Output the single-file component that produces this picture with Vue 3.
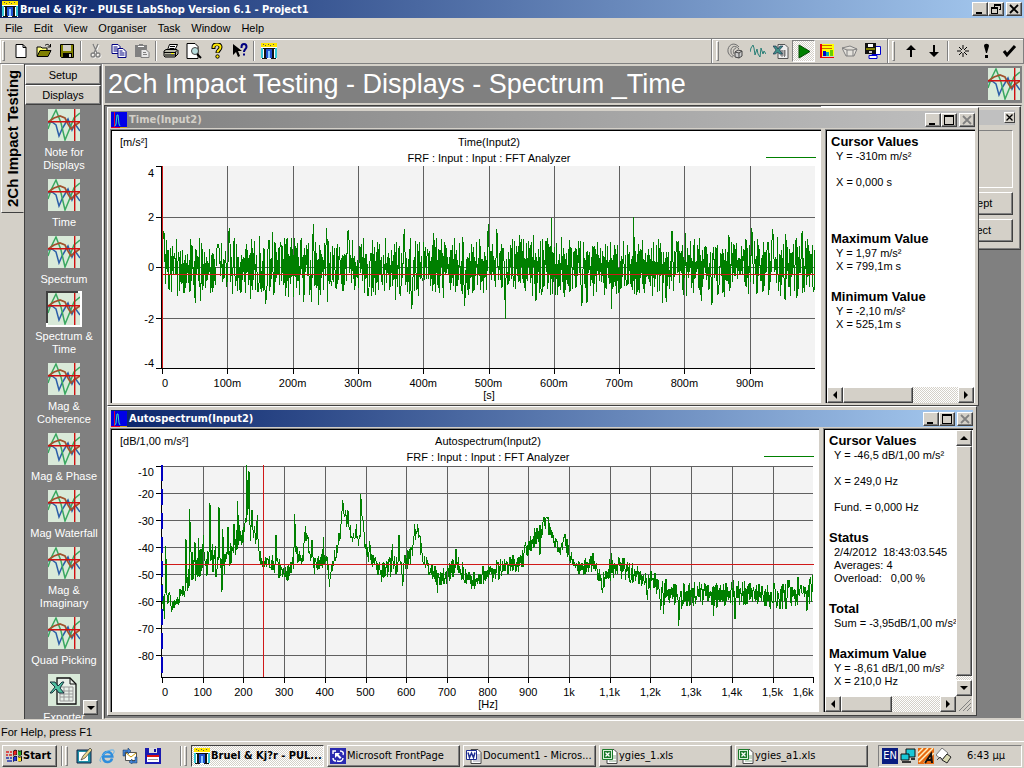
<template>
  <div class="app">
    <svg class="defs" aria-hidden="true">
      <symbol id="i-pulse" viewBox="0 0 16 16" shape-rendering="crispEdges">
        <path d="M0 4h16v12H0z" fill="#fff" /><path d="M0 0h16v4H0z" fill="#ffe600" />
        <path d="M2 1h1v1H2zM4 2h1v1H4zM7 1h1v1H7zM9 2h1v1H9zM12 1h1v1h-1z" fill="#555" />
        <path d="M2 5h12v1H2zM3 6h2v9H3zM11 6h2v9h-2zM1 15h5v1H1zM10 15h5v1h-5z" fill="#111" />
        <path d="M5 6h6v9H5z" fill="#2050d0" /><path d="M7 8h2v7H7z" fill="#8cf" /><path d="M0 5h2v10H0zM14 5h2v10h-2z" fill="#35c8d8" />
      </symbol>
      <symbol id="i-wave" viewBox="0 0 32 32">
        <path d="M0 0h32v32H0z" fill="#d9ead9" />
        <path d="M0 14l4-1 4 3 3 11 3-7 3-5 3-5 4 11 3-6 5 7" fill="none" stroke="#2d5fa8" stroke-width="1.5" />
        <path d="M0 20l3-9 5-10 5 13 4 17 5-12 4-10 6-5" fill="none" stroke="#3aa860" stroke-width="1.5" />
        <path d="M0 13l6-4 6-2 5 2 3 6 3 5 3-3 6-4" fill="none" stroke="#a0522d" stroke-width="1.7" />
        <path d="M0 12h32v1.400H0zM26 0h1.400v32H26z" fill="#d01010" />
      </symbol>
      <symbol id="i-exporter" viewBox="0 0 32 32">
        <path d="M0 0h32v32H0z" fill="#d9ead9" />
        <path d="M9 4h13l6 6v20H9z" fill="#e8efe8" stroke="#111" stroke-width="1.3" /><path d="M22 4v6h6" fill="none" stroke="#111" />
        <path d="M12 13h13v14H12zM12 17h13M12 20h13M12 23h13M16 13v14M21 13v14" fill="none" stroke="#999" />
        <path d="M2 8h5l3 4 4-4h2l-4 6 4 5h-5l-3-4-4 4H2l5-6z" fill="#4fc0a0" stroke="#123" stroke-width=".9" />
      </symbol>
      <symbol id="i-graph" viewBox="0 0 16 16">
        <path d="M0 0h16v16H0z" fill="#0000e8" /><path d="M3.500 0v15M0 15.500h9" stroke="#e00030" fill="none" />
        <path d="M4 14l1-2 1-9 1 0 1 9 1 2" stroke="#30e0c0" fill="none" /><path d="M9 15.500h7" stroke="#c8a020" />
      </symbol>
      <symbol id="i-new" viewBox="0 0 16 16"><path d="M3 1.500h7l3 3v10H3z" fill="#fff" stroke="#000" /><path d="M10 1.500v3h3" fill="none" stroke="#000" /></symbol>
      <symbol id="i-open" viewBox="0 0 16 16">
        <path d="M1 13V4h4l1 1h5v3" fill="#ffff80" stroke="#000" /><path d="M1 13.500l3-6h11l-3 6z" fill="#808000" stroke="#000" />
        <path d="M9 2.500c2-2 4-1 5 1M14.500 1v3h-3" fill="none" stroke="#000" />
      </symbol>
      <symbol id="i-save" viewBox="0 0 16 16"><path d="M1.500 1.500h13v13h-12l-1-1z" fill="#808000" stroke="#000" /><path d="M4 2h8v6H4z" fill="#d4d0c8" /><path d="M4 10h9v5H4z" fill="#000" /><path d="M10 11h2v3h-2z" fill="#d4d0c8" /></symbol>
      <symbol id="i-cut" viewBox="0 0 16 16"><g fill="none" stroke="#fff" transform="translate(1 1)"><path d="M5 1l4 9M10 1L6 10" /><circle cx="5" cy="12" r="2" /><circle cx="10" cy="12" r="2" /></g><g fill="none" stroke="#808080" stroke-width="1.300"><path d="M5 1l4 9M10 1L6 10" /><circle cx="5" cy="12" r="2" /><circle cx="10" cy="12" r="2" /></g></symbol>
      <symbol id="i-copy" viewBox="0 0 16 16"><path d="M1 1.500h6l2 2v7H1z" fill="#fff" stroke="#000080" /><path d="M2.500 4h4M2.500 6h5M2.500 8h5" stroke="#000080" /><path d="M7 5.500h5l3 3v6H7z" fill="#fff" stroke="#000080" /><path d="M8.500 8h3M8.500 10h5M8.500 12h5" stroke="#000080" /></symbol>
      <symbol id="i-paste" viewBox="0 0 16 16"><path d="M1 2h4V1h4v1h4v12H1z" fill="#808080" /><path d="M4 3h6v1H4z" fill="#fff" /><path d="M7 6.500h5l3 3v5H7z" fill="#e8e8e8" stroke="#808080" /><path d="M9 9.500h3M9 11.500h4" stroke="#808080" /></symbol>
      <symbol id="i-print" viewBox="0 0 16 16"><path d="M4.500 7l2-5.500h8L12 7" fill="#fff" stroke="#000" /><path d="M7 3.500h5M6.500 5.500h5" stroke="#000" /><path d="M1 8l2-1.500h11l1 1V11l-3 3H2l-1-1z" fill="#b8b8a8" stroke="#000" /><path d="M1 9.500h12M2 12h10M12.500 14V9l2-2" fill="none" stroke="#000" /><path d="M8 10h3v1H8z" fill="#ff0" /></symbol>
      <symbol id="i-preview" viewBox="0 0 16 16"><path d="M1 .5h8l3 3v12H1z" fill="#fff" stroke="#000" /><circle cx="9" cy="8" r="3.500" fill="#b8dede" stroke="#444" /><path d="M11 11l4 4" stroke="#000" stroke-width="2" /></symbol>
      <symbol id="i-help" viewBox="0 0 16 16"><path d="M4.500 6V4c0-4 7-4 7 0 0 3-3 3-3 6" fill="none" stroke="#000" stroke-width="4" /><path d="M4.500 5V4c0-3.500 7-3.500 7 0 0 3-3 3-3 5.500" fill="none" stroke="#ffe800" stroke-width="2" /><circle cx="8.500" cy="13.500" r="1.700" fill="#ffe800" stroke="#000" /></symbol>
      <symbol id="i-context" viewBox="0 0 16 16"><path d="M1 1v11l3-3 2 5 2-1-2-5h4z" fill="#000" /><path d="M9.500 5V4c0-4 5-4 5 0 0 2-2.500 2-2.500 5" fill="none" stroke="#000080" stroke-width="2" /><path d="M11 10.500h2v2h-2z" fill="#000080" /></symbol>
      <symbol id="i-radar" viewBox="0 0 16 16" fill="none" stroke="#707070"><path d="M12 4C7-2 0 2 1 9c1 3 3 5 5 5M12 6C8 1 3 4 4 9c0 2 1 3 3 4M9 5c-3 1-3 4-2 6" /><path d="M8 9l3-2 4 1v5l-3 2-4-1zM8 9l4 1 3-2M12 10v5" fill="#ccc" stroke="#444" /></symbol>
      <symbol id="i-signal" viewBox="0 0 16 16"><path d="M0 9l1-4 2-3 1 3 1 7 2-6 1 5 2 3 1-9 2 6 1-3 2 3" fill="none" stroke="#2a8078" /></symbol>
      <symbol id="i-sheet" viewBox="0 0 16 16"><path d="M5 1.500h7l3 3v11H5z" fill="#eee" stroke="#555" /><path d="M7 8h6M7 10h6M7 12h6M9 7v7M11.500 7v7" stroke="#777" /><path d="M0 3h3l2 3 2-3h3L6.500 7l3 4h-3l-2-2-2 2H0l3-4z" fill="#3e9088" stroke="#124" stroke-width=".6" /></symbol>
      <symbol id="i-play" viewBox="0 0 16 16"><path d="M3 2l11 6.500L3 15z" fill="#008000" stroke="#004800" /></symbol>
      <symbol id="i-chart" viewBox="0 0 16 16" shape-rendering="crispEdges"><path d="M3 1h12v12H3z" fill="#ff0" /><path d="M1 1h2v14H1z" fill="#e00" /><path d="M3 2.500h10M3 5.500h10" stroke="#c60" /><path d="M4 8h3v5H4z" fill="#00c" /><path d="M7 9h3v4H7z" fill="#0aa" /><path d="M11 7h3v6h-3z" fill="#6c0" /><path d="M1 14h14" stroke="#e00" /></symbol>
      <symbol id="i-tray" viewBox="0 0 16 16"><path d="M0 5l8-2 7 3-3 7H4zM0 5l5 2h6l4-1M5 7v6M11 7v6" fill="#e4e2dc" stroke="#808080" /></symbol>
      <symbol id="i-saveas" viewBox="0 0 16 16"><path d="M7 3.500h8.500v8H7zM4 12.500h8v3H4z" fill="#fff" stroke="#0000d0" /><path d="M0 0h11v11H0z" fill="#111" /><path d="M3 1h5v3H3z" fill="#fff" /><path d="M1 5h9v2H1z" fill="#808000" /><path d="M4 8h3v2H4z" fill="#ccc" /></symbol>
      <symbol id="i-up" viewBox="0 0 16 16"><path d="M8 2l5 5H9v7H7V7H3z" /></symbol>
      <symbol id="i-down" viewBox="0 0 16 16"><path d="M8 14L3 9h4V2h2v7h4z" /></symbol>
      <symbol id="i-star" viewBox="0 0 16 16"><path d="M8 2v4M8 10v4M2 8h4M10 8h4M4 4l3 3M9 9l3 3M12 4L9 7M7 9l-3 3" stroke="#000" /></symbol>
      <symbol id="i-bang" viewBox="0 0 16 16"><path d="M6 3c0-3 5-3 5 0L9 10H8zM7 12h3v3H7z" /></symbol>
      <symbol id="i-check" viewBox="0 0 16 16"><path d="M3 8l3 4 8-9" fill="none" stroke="#000" stroke-width="3" /></symbol>
      <symbol id="i-min" viewBox="0 0 12 12" shape-rendering="crispEdges"><path d="M2 9h6v2H2z" /></symbol>
      <symbol id="i-max" viewBox="0 0 12 12" shape-rendering="crispEdges"><path d="M1 1h10v10H1zM2 3v7h8V3z" fill-rule="evenodd" /></symbol>
      <symbol id="i-restore" viewBox="0 0 12 12" shape-rendering="crispEdges"><path d="M4 1h7v6H9V6h1V3H5v1H4zM1 4h7v7H1zM2 6v4h5V6z" fill-rule="evenodd" /></symbol>
      <symbol id="i-close" viewBox="0 0 12 12"><path d="M2 2l8 8M10 2l-8 8" stroke="currentColor" stroke-width="1.800" /></symbol>
      <symbol id="i-left" viewBox="0 0 8 8"><path d="M6 0v8L2 4z" /></symbol>
      <symbol id="i-right" viewBox="0 0 8 8"><path d="M2 0v8l4-4z" /></symbol>
      <symbol id="i-top" viewBox="0 0 8 8"><path d="M0 6h8L4 2z" /></symbol>
      <symbol id="i-bottom" viewBox="0 0 8 8"><path d="M0 2h8L4 6z" /></symbol>
      <symbol id="i-windows" viewBox="0 0 16 16">
        <path d="M7 3c2-2 3-1 4-1v5c-1 0-2-1-4 1zM12 2c1 1 2 1 4 0v5c-2 1-3 1-4 0zM7 9c2-2 3-1 4-1v5c-1 0-2-1-4 1zM12 8c1 1 2 1 4 0v5c-2 1-3 1-4 0z" fill="#111" />
        <path d="M7.500 3.500c1-1 2-1 3-1v4c-1 0-2 0-3 1z" fill="#e22" /><path d="M12 3c1 1 2 1 3 0v4c-1 1-2 0-3 0z" fill="#2a2" /><path d="M7.500 9.500c1-1 2-1 3-1v4c-1 0-2 0-3 1z" fill="#23d" /><path d="M12 9c1 1 2 1 3 0v4c-1 1-2 0-3 0z" fill="#fd2" />
        <path d="M0 4h3M4 4h2M0 7h2M3 7h3" stroke="#d22" stroke-width="1.500" /><path d="M0 10h3M4 10h2M1 13h5" stroke="#23a" stroke-width="1.500" />
      </symbol>
      <symbol id="i-desktop" viewBox="0 0 16 16"><path d="M1 2h14v13H1z" fill="#2090a8" stroke="#124" /><path d="M3 4h9v9H3z" fill="#fff" /><path d="M5 12l2-4 7-8 2 2-7 8z" fill="#e8d890" stroke="#333" stroke-width=".7" /></symbol>
      <symbol id="i-ie" viewBox="0 0 16 16"><path d="M13 10.500c-1 5-9 5-9-2 0-6 9-6 9.300 0H5" fill="none" stroke="#2f8ddc" stroke-width="2.600" /><path d="M2 14c-4-2 5-13 12-12 2 0 1 3 0 4" fill="none" stroke="#58b0ee" /></symbol>
      <symbol id="i-mail" viewBox="0 0 16 16"><path d="M3.500 4.500h11v8h-11z" fill="#fff" stroke="#555" /><path d="M4 5l5 4 5-4" fill="none" stroke="#c90" /><path d="M1 8V2h5V0l3 3-3 3V4H3v4zM15 9v6h-5v1l-3-2 3-3v2h3V9z" fill="#4484d8" stroke="#135" stroke-width=".5" /></symbol>
      <symbol id="i-disk" viewBox="0 0 16 16"><path d="M0 0h16v16H0z" fill="#1a1ab0" /><path d="M4 0h8v5H4z" fill="#ddd" /><path d="M9 1h2v3H9z" fill="#119" /><path d="M2 7h12v2H2z" fill="#d11" /><path d="M2 9h12v5H2z" fill="#fff" /><path d="M3 11.500h10" stroke="#999" /></symbol>
      <symbol id="i-frontpage" viewBox="0 0 16 16"><path d="M0 0h16v16H0z" fill="#2a2ab0" /><path d="M3 6V3h3M10 3c3 0 4 2 3 4M13 10c0 3-3 4-6 3M3 10c0 2 1 3 3 3" fill="none" stroke="#fff" stroke-width="1.400" /><path d="M5 5h5L8.500 6.500l3 3-1.500 1.500-3-3L5 10z" fill="#fff" /></symbol>
      <symbol id="i-word" viewBox="0 0 16 16"><path d="M5 1.500h7l3 3v11H5z" fill="#fff" stroke="#444" /><path d="M11 7h3M11 9h3M11 11h3M7 13h7" stroke="#99a" /><path d="M.5 2.500h10v9H.5z" fill="#fff" stroke="#1c2c90" /><path d="M2 4.500l1.500 5L5.500 5l2 4.500L9 4.500" fill="none" stroke="#1c2c90" stroke-width="1.500" /></symbol>
      <symbol id="i-excel" viewBox="0 0 16 16"><path d="M5 1.500h7l3 3v11H5z" fill="#fff" stroke="#444" /><path d="M11 8h3M11 10h3M7 13h7" stroke="#8a8" /><path d="M.5 1.500h10v10H.5z" fill="#d8f0d8" stroke="#1a7a2a" /><path d="M2 3h7v7H2z" fill="#1a7a2a" /><path d="M3.500 4.500l4 4M7.500 4.500l-4 4" stroke="#fff" stroke-width="1.300" /></symbol>
      <symbol id="i-net" viewBox="0 0 16 16"><path d="M6 1h9v8H6z" fill="#18c8d8" stroke="#111" /><path d="M1 6h8v6H1z" fill="#18c8d8" stroke="#111" /><path d="M2 14h9M11 11h4" stroke="#333" stroke-width="2" /></symbol>
      <symbol id="i-av" viewBox="0 0 16 16"><path d="M0 0h16v16H0z" fill="#e86a10" /><path d="M0 5l5-5M0 10L10 0M1 14L15 0M6 15L16 5" stroke="#fff0c0" stroke-width="1.500" /><path d="M7 15l6-9 1 9M9 12h5" fill="none" stroke="#111" stroke-width="2" /></symbol>
      <symbol id="i-tool" viewBox="0 0 16 16"><path d="M0 7l6-7 6 5-6 7z" fill="#fff" stroke="#777" /><path d="M6 12l5-6 4 3-4 6z" fill="#d8d8b0" stroke="#222" /><path d="M1 12l3-3 3 3" fill="none" stroke="#444" /></symbol>
    </svg>

    <header class="titlebar">
      <svg class="ico"><use href="#i-pulse" /></svg>
      <h1>Bruel &amp; Kj?r - PULSE LabShop Version 6.1 - Project1</h1>
      <button class="cap" aria-label="Minimize"><svg><use href="#i-min" /></svg></button>
      <button class="cap" aria-label="Restore"><svg><use href="#i-restore" /></svg></button>
      <button class="cap cap-close" aria-label="Close"><svg><use href="#i-close" /></svg></button>
    </header>

    <nav class="menu">
      <button v-for="m in menus" :key="m">{{ m }}</button>
    </nav>

    <div class="toolbar">
      <div v-for="(bar, b) in toolbars" :key="b" class="bar" :class="{ main: b === 0 }">
        <i class="grip"></i>
        <template v-for="(t, i) in bar" :key="i">
          <i v-if="t === '|'" class="sep"></i>
          <button v-else class="tool" :class="{ pressed: t === 'play' }" :aria-label="t">
            <svg class="ico"><use :href="'#i-' + t" /></svg>
          </button>
        </template>
      </div>
    </div>

    <main class="body">
      <div class="tabs"><button class="vtab">2Ch Impact Testing</button></div>

      <aside class="sidebar">
        <button class="group">Setup</button>
        <button class="group">Displays</button>
        <div class="shortcuts">
          <button v-for="s in shortcuts" :key="s.label" class="shortcut" :class="{ active: s.active, wrap: s.wrap }">
            <svg><use :href="s.icon || '#i-wave'" /></svg>
            <span>{{ s.label }}</span>
          </button>
        </div>
        <button class="more" aria-label="Scroll down"><svg><use href="#i-bottom" /></svg></button>
      </aside>

      <section class="content">
        <div class="banner">
          <h2>2Ch Impact Testing - Displays - Spectrum _Time</h2>
          <svg><use href="#i-wave" /></svg>
        </div>

        <div class="workspace">
          <div class="dialog">
            <div class="dialog-title"><button aria-label="Close dialog"><svg><use href="#i-close" /></svg></button></div>
            <div class="dialog-box"></div>
            <button class="dialog-btn">Accept</button>
            <button class="dialog-btn">Reject</button>
          </div>

          <article v-for="w in windows" :key="w.title" class="window" :class="w.cls">
            <div class="win-title">
              <svg class="ico"><use href="#i-graph" /></svg>
              <h3>{{ w.title }}</h3>
              <button class="cap" aria-label="Minimize"><svg><use href="#i-min" /></svg></button>
              <button class="cap" aria-label="Maximize"><svg><use href="#i-max" /></svg></button>
              <button class="cap cap-close off" aria-label="Close"><svg><use href="#i-close" /></svg></button>
            </div>
            <div class="win-body">
              <div class="chart">
                <svg :viewBox="`0 0 ${w.width} ${w.height}`" shape-rendering="crispEdges" role="img" :aria-label="w.title">
                  <rect :x="50" :y="w.top" :width="w.right - 50" :height="w.bottom - w.top" fill="#f3f3f3" />
                  <path :d="w.grid" stroke="#606060" fill="none" />
                  <path :d="w.axis" stroke="#000" fill="none" />
                  <path :d="w.trace" stroke="#008000" fill="none" stroke-linejoin="bevel" />
                  <path :d="w.cursor" stroke="#d01818" fill="none" />
                  <path v-if="w.marker" :d="w.marker" stroke="#0000c0" stroke-width="2" stroke-dasharray="16 8" fill="none" />
                  <path v-if="w.redAxis" :d="w.redAxis" stroke="#d01818" fill="none" />
                  <path :d="`M${w.right - 49} 26.5h50`" stroke="#008000" />
                  <text x="8" y="15">{{ w.unit }}</text>
                  <text :x="w.mid" y="15" text-anchor="middle">{{ w.title }}</text>
                  <text :x="w.mid" y="31" text-anchor="middle">FRF : Input : Input : FFT Analyzer</text>
                  <text v-for="t in w.yTicks" :key="'y' + t.text" x="42" :y="t.at" text-anchor="end">{{ t.text }}</text>
                  <text v-for="t in w.xTicks" :key="'x' + t.text" :x="t.at" :y="w.bottom + 19" text-anchor="middle">{{ t.text }}</text>
                  <text :x="w.mid" :y="w.bottom + 31" text-anchor="middle">{{ w.xUnit }}</text>
                </svg>
              </div>
              <div class="side">
                <div class="side-main">
                  <div class="values">
                    <section v-for="s in w.values" :key="s.head">
                      <h4>{{ s.head }}</h4>
                      <p v-for="(r, i) in s.rows" :key="i">{{ r }}</p>
                    </section>
                  </div>
                  <div v-if="w.marker" class="vscroll">
                    <button aria-label="Scroll up"><svg><use href="#i-top" /></svg></button>
                    <i class="thumb"></i>
                    <button aria-label="Scroll down"><svg><use href="#i-bottom" /></svg></button>
                  </div>
                </div>
                <div class="hscroll">
                  <button aria-label="Scroll left"><svg><use href="#i-left" /></svg></button>
                  <i class="thumb"></i><i class="track"></i>
                  <button aria-label="Scroll right"><svg><use href="#i-right" /></svg></button>
                  <svg v-if="w.marker" class="size" viewBox="0 0 16 16"><path d="M3 15L15 3M7 15l8-8M11 15l4-4" stroke="#808080" /></svg>
                </div>
              </div>
            </div>
          </article>
        </div>
      </section>
    </main>

    <div class="status">For Help, press F1</div>

    <footer class="taskbar">
      <button class="start"><svg class="ico"><use href="#i-windows" /></svg>Start</button>
      <i class="sep"></i><i class="grip"></i>
      <div class="quick">
        <button v-for="q in ['desktop', 'ie', 'mail', 'disk']" :key="q" class="tool" :aria-label="q">
          <svg class="ico"><use :href="'#i-' + q" /></svg>
        </button>
      </div>
      <i class="sep"></i><i class="grip"></i>
      <div class="tasks">
        <button v-for="t in tasks" :key="t.text" class="task" :class="{ pressed: t.active }">
          <svg class="ico"><use :href="'#i-' + t.icon" /></svg><span>{{ t.text }}</span>
        </button>
      </div>
      <div class="tray">
        <b>EN</b>
        <svg class="ico"><use href="#i-net" /></svg>
        <svg class="ico"><use href="#i-av" /></svg>
        <svg class="ico"><use href="#i-tool" /></svg>
        <time>6:43 μμ</time>
      </div>
    </footer>
  </div>
</template>

<script setup>
const menus = ['File', 'Edit', 'View', 'Organiser', 'Task', 'Window', 'Help'];

const toolbars = [
  ['new', 'open', 'save', '|', 'cut', 'copy', 'paste', '|', 'print', 'preview', 'help', 'context', '|', 'pulse'],
  ['radar', 'signal', 'sheet', 'play', 'chart', 'tray', 'saveas'],
  ['up', 'down', '|', 'star', 'bang', 'check'],
];

const shortcuts = [
  { label: 'Note for Displays', wrap: true },
  { label: 'Time' },
  { label: 'Spectrum' },
  { label: 'Spectrum & Time', wrap: true, active: true },
  { label: 'Mag & Coherence', wrap: true },
  { label: 'Mag & Phase' },
  { label: 'Mag Waterfall' },
  { label: 'Mag & Imaginary', wrap: true },
  { label: 'Quad Picking' },
  { label: 'Exporter', icon: '#i-exporter' },
];

const tasks = [
  { icon: 'pulse', text: 'Bruel & Kj?r - PUL...', active: true },
  { icon: 'frontpage', text: 'Microsoft FrontPage' },
  { icon: 'word', text: 'Document1 - Micros...' },
  { icon: 'excel', text: 'ygies_1.xls' },
  { icon: 'excel', text: 'ygies_a1.xls' },
];

// small seeded generator so the traces are the same on every load
const makeRandom = (seed) => () => {
  seed = (seed * 1664525 + 1013904223) % 4294967296;
  return seed / 4294967296;
};

// put single peaks on top of the noise, spikes are [x, y]
const toPath = (points, spikes) => {
  spikes.forEach(([x, y]) => {
    let best = 0;
    points.forEach((p, i) => {
      if (Math.abs(p[0] - x) < Math.abs(points[best][0] - x)) best = i;
    });
    points[best][1] = y;
  });
  return 'M' + points.map((p) => p[0].toFixed(1) + ' ' + p[1].toFixed(1)).join('L');
};

const timeTrace = () => {
  const rnd = makeRandom(77);
  const points = [];
  let sign = 1;
  for (let x = 50; x <= 703; x += 0.85) {
    sign = rnd() < 0.92 ? -sign : sign;
    const amp = 5 + 24 * rnd() + (rnd() < 0.25 ? 8 * rnd() : 0);
    points.push([x, 136 - sign * amp]);
  }
  return toPath(points, [
    [52, 100], [117, 97], [201, 93], [215, 97], [236, 99], [154, 173], [206, 174], [292, 98],
    [300, 178], [376, 93], [385, 98], [393, 188], [353, 175], [439, 87], [522, 86], [470, 175],
    [500, 178], [560, 100], [600, 174], [640, 97], [660, 98], [690, 100],
  ]);
};

// noise floor of the spectrum: x, centre, half height
const floor = [
  [50, 170, 18], [55, 166, 5], [59, 173, 8], [66, 173, 8], [70, 160, 6], [74, 158, 8], [77, 140, 17], [82, 140, 18],
  [88, 135, 18], [94, 140, 14], [98, 117, 10], [101, 130, 12], [105, 140, 12], [110, 133, 14], [115, 127, 10],
  [121, 121, 10], [125, 107, 14], [131, 106, 10], [134, 86, 8], [136, 75, 8], [138, 98, 10], [142, 103, 16],
  [147, 121, 8], [150, 133, 4], [158, 133, 8], [165, 138, 9], [173, 143, 9], [180, 140, 9], [183, 118, 6],
  [186, 127, 9], [190, 133, 7], [193, 107, 6], [196, 108, 6], [198, 127, 6], [202, 135, 8], [211, 133, 9],
  [214, 123, 8], [217, 145, 8], [221, 133, 8], [226, 119, 8], [230, 87, 8], [232, 83, 12], [237, 88, 8],
  [240, 113, 5], [244, 100, 7], [247, 113, 6], [250, 80, 6], [252, 108, 8], [256, 123, 8], [263, 133, 6],
  [270, 143, 9], [276, 138, 9], [291, 133, 9], [300, 127, 9], [303, 107, 9], [306, 103, 9], [310, 123, 7],
  [315, 134, 8], [326, 150, 9], [335, 144, 9], [345, 134, 8], [351, 143, 9], [358, 148, 9], [361, 153, 9],
  [375, 143, 9], [385, 140, 9], [398, 137, 9], [411, 128, 9], [416, 117, 9], [425, 105, 9], [435, 92, 9],
  [441, 107, 6], [448, 122, 5], [453, 111, 9], [458, 128, 8], [466, 138, 7], [481, 132, 10], [490, 152, 7],
  [498, 140, 10], [511, 138, 10], [525, 145, 9], [538, 151, 10], [551, 160, 11], [568, 166, 10], [588, 163, 12],
  [605, 165, 11], [631, 161, 13], [648, 165, 12], [665, 166, 12], [681, 163, 14], [701, 157, 15],
];

const spectrumTrace = () => {
  const rnd = makeRandom(2012);
  const points = [];
  let k = 0;
  let sign = 1;
  for (let x = 50; x <= 701; x += 0.75) {
    while (k < floor.length - 2 && floor[k + 1][0] < x) k++;
    const [x0, c0, h0] = floor[k];
    const [x1, c1, h1] = floor[k + 1];
    const f = (x - x0) / (x1 - x0);
    sign = rnd() < 0.8 ? -sign : sign;
    points.push([x, c0 + (c1 - c0) * f + sign * (0.15 + rnd()) * (h0 + (h1 - h0) * f)]);
  }
  return toPath(points, [
    [52, 189], [54, 116], [74, 109], [78, 79], [83, 112], [87, 108], [91, 105], [98, 73], [103, 116], [107, 77],
    [110, 162], [111, 99], [116, 97], [122, 94], [126, 71], [135, 35], [137, 41], [140, 80], [145, 85], [164, 105],
    [183, 84], [193, 96], [200, 110], [211, 107], [217, 157], [231, 70], [234, 80], [244, 94], [249, 64],
    [258, 111], [280, 114], [287, 105], [291, 156], [303, 94], [306, 94], [325, 163], [344, 119], [432, 87],
    [435, 87], [453, 104], [428, 125], [481, 123], [490, 163], [499, 123], [535, 170], [549, 180], [552, 184],
    [567, 196], [570, 179], [601, 186], [623, 189], [695, 181],
  ]);
};

const steps = (n, fn) => Array.from({ length: n }, (_, i) => fn(i));
const at = (v) => Math.round(v) + 0.5;

const timeX = (i) => 50 + i * 65.3;
const specX = (i) => 50 + i * 40.7;

const windows = [
  {
    title: 'Time(Input2)',
    cls: 'inactive',
    width: 709,
    height: 272,
    top: 35,
    right: 703,
    bottom: 237,
    mid: 377,
    unit: '[m/s²]',
    xUnit: '[s]',
    grid: steps(9, (i) => `M${at(timeX(i + 1))} 35v202`).join('') + 'M50 86.5h653M50 136.5h653M50 187.5h653',
    axis: 'M49.500 35v203M44 35.500h6M44 86.500h6M44 136.500h6M44 187.500h6M44 237.500h659' + steps(10, (i) => `M${at(timeX(i))} 238v5`).join(''),
    trace: timeTrace(),
    cursor: 'M50 143.500h653',
    redAxis: 'M50.500 35v202',
    yTicks: [
      { text: '4', at: 46 }, { text: '2', at: 90 }, { text: '0', at: 140 }, { text: '-2', at: 192 }, { text: '-4', at: 236 },
    ],
    xTicks: steps(10, (i) => ({ text: i ? i * 100 + 'm' : '0', at: timeX(i) + (i ? 0 : 3) })),
    values: [
      { head: 'Cursor Values', rows: ['Y = -310m m/s²', '', 'X = 0,000 s', '', ''] },
      { head: 'Maximum Value', rows: ['Y = 1,97 m/s²', 'X = 799,1m s'] },
      { head: 'Minimum Value', rows: ['Y = -2,10 m/s²', 'X = 525,1m s'] },
    ],
  },
  {
    title: 'Autospectrum(Input2)',
    cls: 'current',
    width: 707,
    height: 282,
    top: 36,
    right: 701,
    bottom: 247,
    mid: 376,
    unit: '[dB/1,00 m/s²]',
    xUnit: '[Hz]',
    grid: steps(15, (i) => `M${at(specX(i + 1))} 36v211`).join('') + steps(8, (i) => `M50 ${36.5 + i * 27}h651`).join(''),
    axis: 'M49.500 36v212M49 247.500h653' + steps(8, (i) => `M44 ${36.5 + i * 27}h6`).join('') + steps(17, (i) => `M${at(specX(i))} 248v5`).join(''),
    trace: spectrumTrace(),
    cursor: 'M50 134.500h652M151.500 35v212',
    marker: 'M50 35v211',
    yTicks: steps(8, (i) => ({ text: String(-10 * (i + 1)), at: i ? 41 + i * 27 : 46 })),
    xTicks: steps(17, (i) => ({
      text: i < 10 ? String(i * 100) : String(i / 10).replace('.', ',') + 'k',
      at: specX(i) + (i === 0 ? 3 : i === 16 ? -10 : 0),
    })),
    values: [
      { head: 'Cursor Values', rows: ['Y = -46,5 dB/1,00 m/s²', '', 'X = 249,0 Hz', '', 'Fund. = 0,000 Hz'] },
      { head: 'Status', rows: ['2/4/2012  18:43:03.545', 'Averages: 4', 'Overload:   0,00 %'] },
      { head: 'Total', rows: ['Sum = -3,95dB/1,00 m/s²'] },
      { head: 'Maximum Value', rows: ['Y = -8,61 dB/1,00 m/s²', 'X = 210,0 Hz'] },
    ],
  },
];
</script>

<style>
body {
  margin: 0;
}
</style>

<style scoped>
.app {
  height: 100vh;
  display: flex;
  flex-direction: column;
  overflow: hidden;
  background: #d4d0c8;
  color: #000;
  font: 11px/13px "Liberation Sans", Arial, sans-serif;
}

.app * {
  box-sizing: border-box;
}

.defs {
  position: absolute;
  width: 0;
  height: 0;
}

h1, h2, h3, h4, p {
  margin: 0;
  font-size: inherit;
}

button {
  margin: 0;
  padding: 0;
  border: 0;
  background: #d4d0c8;
  color: inherit;
  font: inherit;
}

svg {
  display: block;
  flex: none;
}

.ico {
  width: 16px;
  height: 16px;
}

.cap, .start, .task, .thumb, .group, .more, .dialog-btn, .hscroll button, .vscroll button {
  border: 1px solid;
  border-color: #fff #404040 #404040 #fff;
  box-shadow: inset -1px -1px #808080;
}

/* title bars */
.titlebar, .win-title {
  display: flex;
  align-items: center;
  color: #fff;
  background: linear-gradient(to right, #0a246a, #a6caf0);
  font-family: "DejaVu Sans Condensed", "DejaVu Sans", sans-serif;
}

.titlebar {
  height: 18px;
  flex: none;
  padding: 0 2px;
}

.titlebar h1, .win-title h3 {
  flex: 1;
  margin-left: 2px;
  font-weight: bold;
  white-space: nowrap;
}

.cap {
  width: 16px;
  height: 14px;
  display: flex;
  align-items: center;
  justify-content: center;
  color: #000;
}

.cap svg {
  width: 12px;
  height: 12px;
}

.cap-close {
  margin-left: 2px;
}

.off {
  color: #808080;
}

/* menu and toolbar */
.menu {
  height: 20px;
  flex: none;
  display: flex;
  gap: 1px;
}

.menu button {
  padding: 0 5px;
}

.toolbar {
  height: 26px;
  flex: none;
  display: flex;
  border-top: 1px solid #808080;
  border-bottom: 1px solid #808080;
  box-shadow: inset 0 1px #fff;
}

.bar {
  display: flex;
  align-items: center;
  padding: 0 3px;
  border-left: 1px solid #fff;
  border-right: 1px solid #808080;
}

.bar.main {
  flex: 1;
  padding-left: 1px;
}

.grip {
  width: 3px;
  height: 20px;
  margin-right: 4px;
  border: 1px solid;
  border-color: #fff #808080 #808080 #fff;
}

.sep {
  width: 2px;
  height: 20px;
  margin: 0 2px;
  border-left: 1px solid #808080;
  border-right: 1px solid #fff;
}

.tool {
  width: 23px;
  height: 22px;
  display: flex;
  align-items: center;
  justify-content: center;
}

.pressed {
  border: 1px solid;
  border-color: #808080 #fff #fff #808080;
  background: repeating-conic-gradient(#fff 0 25%, #d4d0c8 0 50%) 0 0 / 2px 2px;
}

/* main area */
.body {
  flex: 1;
  min-height: 0;
  display: flex;
}

.tabs {
  width: 24px;
  flex: none;
}

.vtab {
  width: 23px;
  height: 149px;
  margin-left: 1px;
  border: 1px solid;
  border-color: #404040 #fff #fff #d4d0c8;
  writing-mode: vertical-rl;
  transform: rotate(180deg);
  font-size: 15px;
  font-weight: bold;
  white-space: nowrap;
}

.sidebar {
  position: relative;
  width: 79px;
  flex: none;
  display: flex;
  flex-direction: column;
  margin-bottom: 1px;
  padding: 1px 1px 0 0;
  overflow: hidden;
  border-left: 1px solid #404040;
  border-right: 1px solid #fff;
  background: #808080;
}

.group {
  height: 20px;
  flex: none;
}

.shortcuts {
  flex: 1;
  min-height: 0;
  display: flex;
  flex-direction: column;
  gap: 7px;
  padding: 4px 0 0 2px;
}

.shortcut {
  flex: none;
  display: flex;
  flex-direction: column;
  align-items: center;
  gap: 5px;
  background: none;
  color: #fff;
}

.shortcut svg {
  width: 32px;
  height: 32px;
}

.shortcut.wrap span {
  width: 60px;
}

.shortcut.active svg {
  box-shadow: -2px -2px #404040, 2px 2px #fff, 2px -2px #fff, -2px 2px #fff;
}

.more {
  position: absolute;
  right: 4px;
  bottom: 4px;
  width: 15px;
  height: 15px;
  display: flex;
  align-items: center;
  justify-content: center;
}

.more svg, .hscroll button svg, .vscroll button svg {
  width: 8px;
  height: 8px;
}

.content {
  flex: 1;
  min-width: 0;
  display: flex;
  flex-direction: column;
  padding: 2px 2px 0 1px;
}

.banner {
  height: 37px;
  flex: none;
  display: flex;
  align-items: center;
  justify-content: space-between;
  margin-left: 1px;
  padding: 0 2px 2px 3px;
  background: #808080;
  color: #fff;
}

.banner h2 {
  font-size: 27px;
  line-height: 34px;
  font-weight: normal;
  white-space: nowrap;
}

.banner svg {
  width: 32px;
  height: 32px;
}

.workspace {
  position: relative;
  flex: 1;
  min-height: 0;
  margin: 2px 0 1px;
  padding: 1px 42px 0 2px;
  overflow: hidden;
  border: 1px solid;
  border-color: #404040 #d4d0c8 #d4d0c8 #404040;
  background: #808080;
}

.window {
  position: relative;
  padding: 2px;
  border: 1px solid;
  border-color: #fff #404040 #404040 #fff;
  background: #d4d0c8;
}

.window.current {
  margin-right: 2px;
}

.win-title {
  height: 17px;
  margin: 1px;
}

.inactive .win-title {
  background: linear-gradient(to right, #808080, #c0c0c0);
  color: #d4d0c8;
}

.win-body {
  display: flex;
  gap: 4px;
  margin-right: 1px;
}

.current .win-body {
  margin-bottom: 1px;
}

.chart {
  flex: 1;
  min-width: 0;
  box-shadow: inset 1px 1px #000;
  padding: 1px 0 0 1px;
}

.chart, .side {
  border: solid #808080;
  border-width: 1px 0 0 1px;
  background: #fff;
}

.chart svg {
  width: 100%;
  height: auto;
}

.chart text {
  font-size: 11px;
}

.side {
  width: 150px;
  flex: none;
  display: flex;
  flex-direction: column;
  box-shadow: inset 1px 1px #000;
  padding: 1px 1px 0 1px;
}

.side-main {
  flex: 1;
  min-height: 0;
  display: flex;
}

.values {
  flex: 1;
  min-width: 0;
  padding: 3px 0 0 4px;
}

.values section {
  margin-bottom: 16px;
}

.values section:last-child {
  margin-bottom: 0;
}

.values h4 {
  font-size: 13px;
  line-height: 16px;
}

.values p {
  min-height: 13px;
  padding-left: 5px;
  white-space: pre;
}

.hscroll, .vscroll {
  display: flex;
  background: repeating-conic-gradient(#fff 0 25%, #d4d0c8 0 50%) 0 0 / 2px 2px;
}

.vscroll {
  width: 16px;
  flex: none;
  flex-direction: column;
}

.vscroll .thumb {
  flex: 1;
  margin-bottom: 4px;
}

.hscroll button, .vscroll button {
  width: 16px;
  height: 16px;
  flex: none;
  display: flex;
  align-items: center;
  justify-content: center;
}

.thumb {
  background: #d4d0c8;
}

.hscroll .thumb {
  flex: 60;
}

.hscroll .track {
  flex: 40;
}

.current .hscroll .thumb, .current .hscroll .track {
  flex: 1;
}

.size {
  width: 16px;
  height: 16px;
  background: #d4d0c8;
}

/* dialog partly hidden behind the windows */
.dialog {
  position: absolute;
  top: 0;
  right: 0;
  width: 200px;
  height: 144px;
  padding: 3px 5px;
  border: 1px solid;
  border-color: #fff #404040 #404040 #fff;
  box-shadow: inset -1px -1px #808080;
  background: #d4d0c8;
}

.dialog-title {
  height: 15px;
  display: flex;
  justify-content: flex-end;
  align-items: center;
  background: #c0c0c0;
}

.dialog-title button {
  width: 11px;
  height: 11px;
  border: 1px solid;
  border-color: #fff #404040 #404040 #fff;
}

.dialog-title svg {
  width: 9px;
  height: 9px;
}

.dialog-box {
  height: 58px;
  margin: 5px 2px 4px;
  border: 1px solid #808080;
  border-right-color: #fff;
  border-bottom-color: #fff;
}

.dialog-btn {
  display: block;
  width: 75px;
  height: 23px;
  margin: 0 2px 4px auto;
}

/* status bar and taskbar */
.status {
  height: 21px;
  flex: none;
  padding: 5px 1px 0;
  border-top: 1px solid #fff;
}

.taskbar {
  height: 27px;
  flex: none;
  display: flex;
  align-items: center;
  padding: 1px 2px 0;
  border-top: 1px solid #fff;
  font-family: "DejaVu Sans Condensed", "DejaVu Sans", sans-serif;
}

.start {
  width: 55px;
  height: 22px;
  display: flex;
  align-items: center;
  gap: 1px;
  margin-right: 2px;
  padding-left: 3px;
  font-weight: bold;
}

.quick {
  display: flex;
  margin-right: 14px;
}

.tasks {
  flex: 1;
  min-width: 0;
  display: flex;
  gap: 3px;
}

.tasks .task {
  flex: 1 1 0;
  min-width: 0;
  height: 22px;
  display: flex;
  align-items: center;
  gap: 1px;
  padding: 0 2px;
  white-space: nowrap;
}

.task.pressed {
  border-color: #404040 #fff #fff #404040;
  box-shadow: none;
  font-weight: bold;
}

.tray {
  width: 144px;
  height: 22px;
  flex: none;
  display: flex;
  align-items: center;
  gap: 2px;
  margin-left: 10px;
  padding: 0 16px 0 3px;
  border: 1px solid;
  border-color: #808080 #fff #fff #808080;
}

.tray b {
  width: 16px;
  line-height: 16px;
  background: #0a1c80;
  color: #fff;
  font-weight: normal;
  text-align: center;
}

.tray time {
  margin-left: auto;
  white-space: nowrap;
}
</style>
